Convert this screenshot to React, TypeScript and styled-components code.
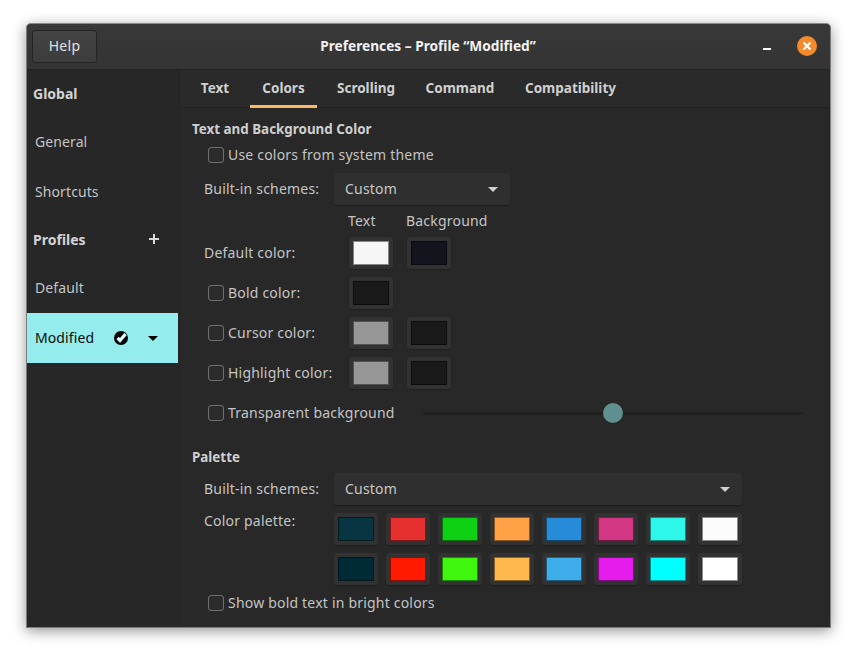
import React from "react";
import styled, { createGlobalStyle } from "styled-components";

const Global = createGlobalStyle`
  html, body { margin: 0; padding: 0; background: #fff; }
  body { font-family: "Noto Sans", "Open Sans", sans-serif; font-size: 14px; }
  * { box-sizing: border-box; }
`;

const Page = styled.div`
  width: 856px;
  height: 656px;
  padding: 23px 25px 28px 26px;
`;

const Window = styled.div`
  width: 805px;
  height: 605px;
  display: flex;
  flex-direction: column;
  background: #282828;
  border: 1px solid #7c7c7c;
  border-top-color: #8a8a8a;
  border-radius: 5px 5px 0 0;
  box-shadow: 0 3px 14px rgba(0, 0, 0, 0.42);
  overflow: hidden;
`;

const HeaderBar = styled.header`
  height: 46px;
  flex: none;
  display: flex;
  align-items: center;
  position: relative;
  padding: 0 13px 1px 5px;
  background: linear-gradient(#383838, #343434);
  border-bottom: 1px solid #222;
`;

const HelpButton = styled.div`
  width: 65px;
  height: 33px;
  padding-bottom: 2px;
  display: flex;
  align-items: center;
  justify-content: center;
  border-radius: 3px;
  background: linear-gradient(#444, #3c3c3c);
  border: 1px solid #232323;
  color: #e0e0e0;
  letter-spacing: 0.3px;
`;

const Title = styled.div`
  position: absolute;
  left: 0;
  right: 1px;
  top: 12px;
  text-align: center;
  font-weight: 700;
  font-size: 13.7px;
  color: #f2f2f2;
`;

const HeaderControls = styled.div`
  margin-left: auto;
  display: flex;
  align-items: center;
  gap: 25px;
`;

const Body = styled.div`
  flex: 1;
  display: flex;
  min-height: 0;
`;

const Sidebar = styled.nav`
  width: 153px;
  flex: none;
  padding-top: 1px;
  background: #272727;
  border-right: 1px solid #242424;
`;

const SideHeading = styled.div`
  height: 46px;
  padding: 0 20px 2px 6px;
  display: flex;
  align-items: center;
  justify-content: space-between;
  font-weight: 700;
  color: #d4d4d4;
`;

const SideItem = styled.div<{ $active?: boolean }>`
  height: 50px;
  padding: 0 0 2px 8px;
  display: flex;
  align-items: center;
  letter-spacing: 0.1px;
  color: ${(p) => (p.$active ? "#0c0c0c" : "#c4c4c4")};
  background: ${(p) => (p.$active ? "#94ecec" : "transparent")};
  width: ${(p) => (p.$active ? "151px" : "auto")};
`;

const ItemIcons = styled.span`
  margin: 2px 0 0 20px;
  display: flex;
  align-items: center;
  gap: 20px;
`;

const Main = styled.main`
  flex: 1;
  min-width: 0;
  display: flex;
  flex-direction: column;
`;

const TabBar = styled.div`
  height: 38px;
  flex: none;
  padding-left: 8px;
  display: flex;
  gap: 8px;
  background: #2a2a2a;
  border-bottom: 1px solid #222;
`;

const Tab = styled.div<{ $active?: boolean; $w: number }>`
  width: ${(p) => p.$w}px;
  height: 38px;
  padding-top: 1px;
  display: flex;
  align-items: center;
  justify-content: center;
  font-weight: 700;
  font-size: 13.5px;
  color: #d0d0d0;
  border-bottom: 3px solid ${(p) => (p.$active ? "#fdb864" : "transparent")};
`;

const Content = styled.div`
  flex: 1;
  padding: 10px 0 0 12px;
  display: flex;
  flex-direction: column;
  color: #c4c4c4;
  letter-spacing: 0.2px;
`;

const SectionTitle = styled.div<{ $mt?: number }>`
  height: 22px;
  margin-top: ${(p) => p.$mt ?? 0}px;
  padding-bottom: 1px;
  display: flex;
  align-items: center;
  font-weight: 700;
  font-size: 13.4px;
  color: #cfcfcf;
  letter-spacing: 0;
`;

const Row = styled.div<{ $mt?: number }>`
  display: flex;
  align-items: center;
  height: 32px;
  padding-left: 12px;
  margin-top: ${(p) => p.$mt ?? 8}px;
`;

const CheckRow = styled(Row)`
  padding-left: 16px;
`;

const Label = styled.span<{ $w?: number }>`
  width: ${(p) => p.$w ?? 130}px;
  flex: none;
  margin-bottom: 2px;
  white-space: nowrap;
`;

const Box = styled.span`
  width: 16px;
  height: 16px;
  flex: none;
  margin-right: 4px;
  border: 1px solid #6f6f6f;
  border-radius: 3px;
  background: #2b2b2b;
`;

const Combo = styled.div<{ $w: number }>`
  width: ${(p) => p.$w}px;
  height: 32px;
  padding: 0 12px 0 11px;
  display: flex;
  align-items: center;
  justify-content: space-between;
  background: #2f2f2f;
  border-radius: 3px;
  box-shadow: 0 1px 1px #1d1d1d;
  color: #c8c8c8;
`;

const ComboText = styled.span`
  margin-bottom: 2px;
`;

const Heads = styled.div`
  height: 16px;
  margin-top: 8px;
  padding-left: 156px;
  display: flex;
  align-items: center;
`;

const HeadCell = styled.span`
  width: 58px;
  margin-bottom: 2px;
  white-space: nowrap;
`;

const Swatches = styled.div`
  display: flex;
  gap: 14px;
`;

const Swatch = styled.div<{ $c: string }>`
  width: 44px;
  height: 32px;
  padding: 4px;
  background: #323232;
  border-radius: 3px;
  box-shadow: 0 1px 1px #1f1f1f;

  &::after {
    content: "";
    display: block;
    width: 100%;
    height: 100%;
    background: ${(p) => p.$c};
    box-shadow: inset 0 0 0 1px rgba(0, 0, 0, 0.46);
  }
`;

const SwatchGap = styled.div`
  width: 44px;
`;

const Slider = styled.div`
  position: relative;
  width: 381px;
  height: 3px;
  border-radius: 2px;
  background: #222;
  border: 1px solid #1f1f1f;
`;

const Thumb = styled.div`
  position: absolute;
  left: 179px;
  top: -10px;
  width: 20px;
  height: 20px;
  border-radius: 50%;
  background: #5f8f8e;
`;

const PaletteBlock = styled.div`
  display: flex;
  padding-left: 12px;
  margin-top: 8px;
`;

const PaletteLabel = styled.span`
  width: 130px;
  flex: none;
  line-height: 16px;
`;

const PaletteGrid = styled.div`
  display: grid;
  grid-template-columns: repeat(8, 44px);
  gap: 8px;
`;

const CaretIcon = ({ color }: { color: string }) => (
  <svg width="10" height="5" viewBox="0 0 10 5">
    <path d="M0 0h10L5 5z" fill={color} />
  </svg>
);

const colors1 = ["#073642", "#e6302f", "#0fd114", "#ffa144", "#268bd8", "#d33682", "#2df7e8", "#fcfcfc"];
const colors2 = ["#002b36", "#ff1a00", "#3ef70c", "#ffb84d", "#3daee9", "#e61ced", "#00ffff", "#ffffff"];

export default function App() {
  return (
    <Page>
      <Global />
      <Window>
        <HeaderBar>
          <HelpButton>Help</HelpButton>
          <Title>Preferences – Profile “Modified”</Title>
          <HeaderControls>
            <svg width="10" height="8" viewBox="0 0 10 8">
              <rect width="8" height="2" x="1" y="6" fill="#fff" />
            </svg>
            <svg width="20" height="20" viewBox="0 0 20 20">
              <circle cx="10" cy="10" r="10" fill="#f58a2a" />
              <path d="M6.5 6.5l7 7M13.5 6.5l-7 7" stroke="#fff" strokeWidth="2.2" />
            </svg>
          </HeaderControls>
        </HeaderBar>
        <Body>
          <Sidebar>
            <SideHeading>Global</SideHeading>
            <SideItem>General</SideItem>
            <SideItem>Shortcuts</SideItem>
            <SideHeading>
              Profiles
              <svg width="10" height="10" viewBox="0 0 10 10">
                <path d="M5 0v10M0 5h10" stroke="#d8d8d8" strokeWidth="2" />
              </svg>
            </SideHeading>
            <SideItem>Default</SideItem>
            <SideItem $active>
              Modified
              <ItemIcons>
                <svg width="14" height="14" viewBox="0 0 14 14">
                  <circle cx="7" cy="7" r="7" fill="#000" />
                  <path d="M3.6 7l2.4 2.5L11.6 2.8" fill="none" stroke="#94ecec" strokeWidth="3.4" />
                  <path d="M3.8 7l2.3 2.4L11 3.6" fill="none" stroke="#fff" strokeWidth="1.9" />
                </svg>
                <CaretIcon color="#000" />
              </ItemIcons>
            </SideItem>
          </Sidebar>
          <Main>
            <TabBar>
              <Tab $w={54}>Text</Tab>
              <Tab $w={67} $active>Colors</Tab>
              <Tab $w={82}>Scrolling</Tab>
              <Tab $w={90}>Command</Tab>
              <Tab $w={115}>Compatibility</Tab>
            </TabBar>
            <Content>
              <SectionTitle>Text and Background Color</SectionTitle>
              <CheckRow $mt={-1}>
                <Box />
                <Label>Use colors from system theme</Label>
              </CheckRow>
              <Row $mt={2}>
                <Label>Built-in schemes:</Label>
                <Combo $w={176}>
                  <ComboText>Custom</ComboText>
                  <CaretIcon color="#d0d0d0" />
                </Combo>
              </Row>
              <Heads>
                <HeadCell>Text</HeadCell>
                <HeadCell>Background</HeadCell>
              </Heads>
              <Row>
                <Label $w={145}>Default color:</Label>
                <Swatches>
                  <Swatch $c="#f6f6f6" />
                  <Swatch $c="#14141f" />
                </Swatches>
              </Row>
              <CheckRow>
                <Box />
                <Label $w={121}>Bold color:</Label>
                <Swatches>
                  <Swatch $c="#191919" />
                  <SwatchGap />
                </Swatches>
              </CheckRow>
              <CheckRow>
                <Box />
                <Label $w={121}>Cursor color:</Label>
                <Swatches>
                  <Swatch $c="#969696" />
                  <Swatch $c="#191919" />
                </Swatches>
              </CheckRow>
              <CheckRow>
                <Box />
                <Label $w={121}>Highlight color:</Label>
                <Swatches>
                  <Swatch $c="#969696" />
                  <Swatch $c="#191919" />
                </Swatches>
              </CheckRow>
              <CheckRow>
                <Box />
                <Label $w={195}>Transparent background</Label>
                <Slider>
                  <Thumb />
                </Slider>
              </CheckRow>
              <SectionTitle $mt={17}>Palette</SectionTitle>
              <Row $mt={5}>
                <Label>Built-in schemes:</Label>
                <Combo $w={408}>
                  <ComboText>Custom</ComboText>
                  <CaretIcon color="#d0d0d0" />
                </Combo>
              </Row>
              <PaletteBlock>
                <PaletteLabel>Color palette:</PaletteLabel>
                <PaletteGrid>
                  {[...colors1, ...colors2].map((c, i) => (
                    <Swatch key={i} $c={c} />
                  ))}
                </PaletteGrid>
              </PaletteBlock>
              <CheckRow $mt={2}>
                <Box />
                <Label>Show bold text in bright colors</Label>
              </CheckRow>
            </Content>
          </Main>
        </Body>
      </Window>
    </Page>
  );
}
